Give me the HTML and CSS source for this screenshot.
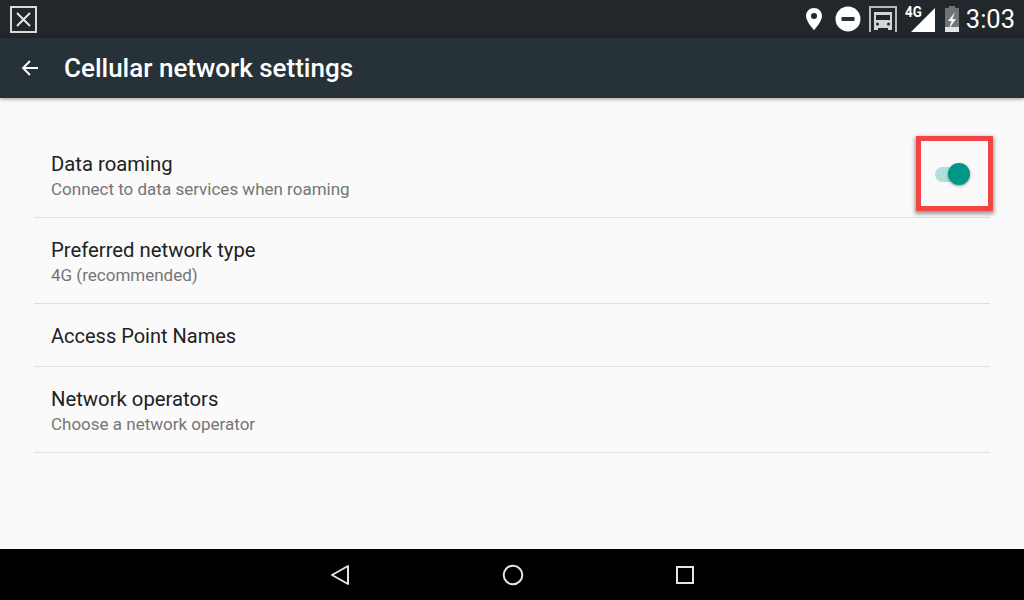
FILE: index.html
```html
<!DOCTYPE html>
<html lang="en">
<head>
    <meta charset="UTF-8">
    <title>Cellular network settings</title>
    <link rel="stylesheet" href="styles.css">
</head>
<body>
    <div class="status-bar">
        <svg class="close-icon" width="28" height="28" viewBox="0 0 28 28">
            <rect x="1" y="1" width="25" height="25" fill="none" stroke="#d8dbdc" stroke-width="2"/>
            <path d="M7 7L20 20M20 7L7 20" stroke="#e4e6e6" stroke-width="2" fill="none"/>
        </svg>
        <div class="status-icons">
            <svg class="icon-pin" width="18" height="24" viewBox="0 0 18 24">
                <path fill-rule="evenodd" fill="#fff" d="M9 1C4.600 1 1 4.500 1 8.900 1 14.500 9 23 9 23s8-8.500 8-14.100C17 4.500 13.400 1 9 1zM9 6a3 3 0 1 1 0 6 3 3 0 0 1 0-6z"/>
            </svg>
            <svg class="icon-dnd" width="26" height="26" viewBox="0 0 26 26">
                <circle cx="13" cy="13" r="12.500" fill="#fff"/>
                <rect x="6.500" y="11" width="13" height="4" fill="#263238"/>
            </svg>
            <svg class="icon-car" width="28" height="27" viewBox="0 0 28 27">
                <path d="M1 26V1h26v25" fill="none" stroke="#b9bcbd" stroke-width="2"/>
                <path fill="#d4d6d6" d="M5 6h18v18h-4v-2H9v2H5z"/>
                <path fill="#21272a" d="M7 9h14v5H7z"/>
                <circle cx="8.500" cy="18" r="1.500" fill="#21272a"/>
                <circle cx="19.500" cy="18" r="1.500" fill="#21272a"/>
            </svg>
            <div class="signal">
                <span class="signal-label">4G</span>
                <svg width="24" height="25" viewBox="0 0 24 25">
                    <path fill="#fff" d="M24 1V25H0z"/>
                </svg>
            </div>
            <svg class="icon-battery" width="16" height="26" viewBox="0 0 16 26">
                <path fill="#6f7477" d="M5 0h6v2h4v24H1V2h4z"/>
                <path fill="#e4e5e6" d="M1 21h14v5H1z"/>
                <path fill="#f2f2f2" d="M11 6L4 15h3.500L5 23l7-10H8.500z"/>
            </svg>
            <span class="clock">3:03</span>
        </div>
    </div>

    <div class="toolbar">
        <svg class="back-arrow" width="20" height="20" viewBox="0 0 20 20">
            <path d="M18 10H3M10 3L3 10l7 7" fill="none" stroke="#fff" stroke-width="1.800"/>
        </svg>
        <h1>Cellular network settings</h1>
    </div>

    <div class="content">
        <div class="settings-list">
            <div class="setting-row">
                <div>
                    <div class="setting-title">Data roaming</div>
                    <div class="setting-sub">Connect to data services when roaming</div>
                </div>
                <div class="switch">
                    <div class="switch-track"></div>
                    <div class="switch-thumb"></div>
                </div>
                <div class="highlight"></div>
            </div>
            <div class="setting-row">
                <div>
                    <div class="setting-title">Preferred network type</div>
                    <div class="setting-sub">4G (recommended)</div>
                </div>
            </div>
            <div class="setting-row short">
                <div class="setting-title">Access Point Names</div>
            </div>
            <div class="setting-row">
                <div>
                    <div class="setting-title">Network operators</div>
                    <div class="setting-sub">Choose a network operator</div>
                </div>
            </div>
        </div>
    </div>

    <div class="nav-bar">
        <svg width="20" height="22" viewBox="0 0 20 22">
            <path d="M18 2V20L2 11z" fill="none" stroke="#e4e4e4" stroke-width="2" stroke-linejoin="round"/>
        </svg>
        <svg width="22" height="22" viewBox="0 0 22 22">
            <circle cx="11" cy="11" r="9.300" fill="none" stroke="#e4e4e4" stroke-width="2"/>
        </svg>
        <svg width="18" height="18" viewBox="0 0 18 18">
            <rect x="1" y="1" width="16" height="16" fill="none" stroke="#e4e4e4" stroke-width="2"/>
        </svg>
    </div>
</body>
</html>
```

FILE: styles.css
```css
* {
    margin: 0;
    padding: 0;
    box-sizing: border-box;
}

body {
    font-family: Roboto, sans-serif;
    background: #fafafa;
    width: 1024px;
    height: 600px;
    overflow: hidden;
    display: flex;
    flex-direction: column;
}

.status-bar {
    height: 38px;
    background: #21272a;
    display: flex;
    align-items: center;
    justify-content: space-between;
    padding: 0 9px 0 10px;
}

.close-icon {
    display: block;
    margin-top: 1px;
}

.status-icons {
    display: flex;
    align-items: center;
}

.icon-pin {
    margin-right: 12px;
}

.icon-dnd {
    margin-right: 8px;
}

.icon-car {
    margin-right: 8px;
}

.signal {
    display: flex;
    align-items: flex-end;
    justify-content: flex-end;
    position: relative;
    width: 30px;
    height: 26px;
    margin-right: 9px;
}

.signal-label {
    position: absolute;
    left: 0;
    top: -2px;
    color: #fff;
    font-size: 14px;
    font-weight: 700;
    line-height: 16px;
    transform: scaleX(0.95);
    transform-origin: left;
}

.icon-battery {
    margin-right: 6px;
}

.clock {
    color: #fff;
    font-size: 25.500px;
    line-height: 38px;
}

.toolbar {
    height: 60px;
    background: #263238;
    display: flex;
    align-items: center;
    padding-left: 20px;
    box-shadow: 0 1px 4px rgba(0,0,0,0.4);
    position: relative;
}

.toolbar h1 {
    color: #fff;
    font-size: 26px;
    font-weight: 500;
    line-height: 62px;
    margin-left: 24px;
}

.content {
    flex: 1;
    padding: 34px 34px 0;
}

.settings-list {
    width: 956px;
}

.setting-row {
    height: 86px;
    padding: 3px 17px 0;
    border-bottom: 1px solid #dfdfdf;
    display: flex;
    align-items: center;
    position: relative;
}

.setting-row.short {
    height: 63px;
    padding-top: 2px;
}

.setting-title {
    font-size: 20.300px;
    line-height: 26px;
    color: #212121;
}

.short .setting-title {
    font-size: 20px;
}

.setting-sub {
    font-size: 17px;
    line-height: 24px;
    color: #757575;
}

.switch {
    position: absolute;
    left: 901px;
    top: 31px;
    width: 35px;
    height: 22px;
}

.switch-track {
    position: absolute;
    left: 0;
    top: 4px;
    width: 30px;
    height: 15px;
    border-radius: 8px;
    background: #b2dfdb;
}

.switch-thumb {
    position: absolute;
    right: 0;
    top: 0;
    width: 22px;
    height: 22px;
    border-radius: 50%;
    background: #009688;
    box-shadow: 0 1px 3px rgba(0,0,0,0.4);
}

.highlight {
    position: absolute;
    left: 882px;
    top: 4px;
    width: 77px;
    height: 75px;
    border: 5px solid #f44545;
    box-shadow: 0 2px 4px 1px rgba(0,0,0,0.4);
}

.nav-bar {
    height: 51px;
    background: #000;
    display: flex;
    align-items: center;
    justify-content: center;
    gap: 152px;
}
```
